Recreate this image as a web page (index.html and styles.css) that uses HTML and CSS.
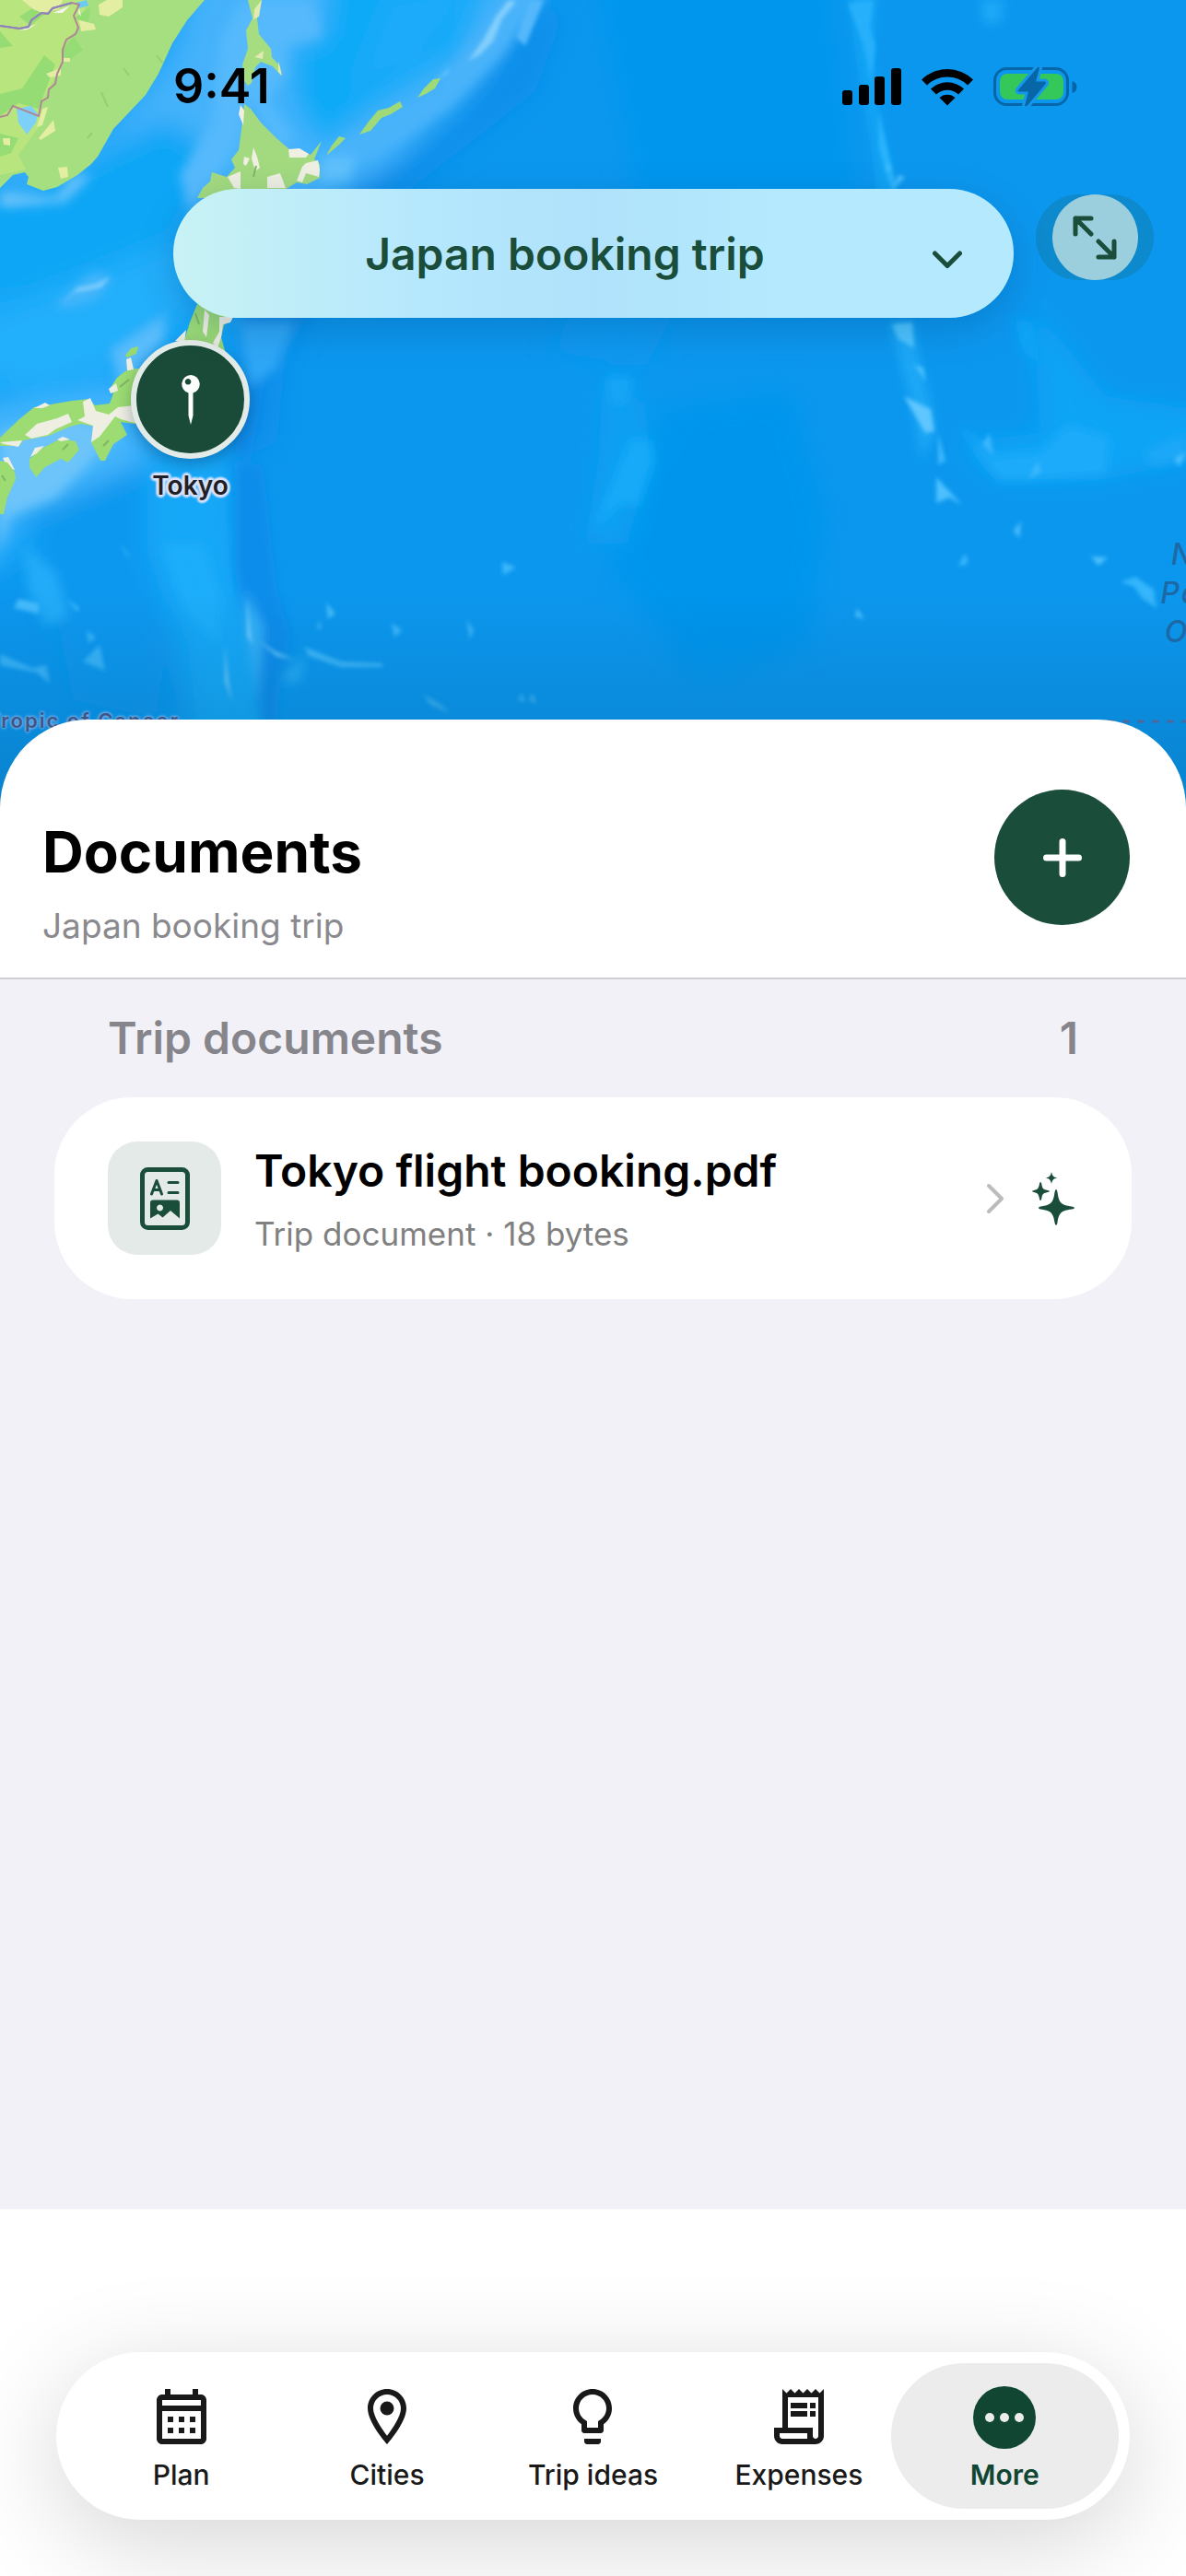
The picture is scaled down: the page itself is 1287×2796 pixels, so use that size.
FILE: index.html
```html
<!DOCTYPE html>
<html lang="en">
<head>
  <meta charset="UTF-8" />
  <meta name="viewport" content="width=device-width, initial-scale=1.0" />
  <title>Japan booking trip | Documents</title>
  <link rel="stylesheet" href="styles.css">
</head>
<body>
  <header class="hero">
    <svg class="map" viewBox="0 0 1287 880" preserveAspectRatio="xMidYMin slice" aria-hidden="true">
      <defs>
        <filter id="soft" x="-20%" y="-20%" width="140%" height="140%"><feGaussianBlur stdDeviation="14" /></filter>
        <filter id="haze" x="-20%" y="-20%" width="140%" height="140%"><feGaussianBlur stdDeviation="6" /></filter>
        <filter id="fine" x="-20%" y="-20%" width="140%" height="140%"><feGaussianBlur stdDeviation="2" /></filter>
        <linearGradient id="shade" x1="0" y1="0" x2="0" y2="1">
          <stop offset="0" stop-color="#00507f" stop-opacity="0" />
          <stop offset="1" stop-color="#00507f" stop-opacity=".3" />
        </linearGradient>
      </defs>
      <rect width="1287" height="880" fill="#0c97ee" />
      <!-- deep and shallow water -->
      <g filter="url(#soft)">
        <path d="M-40 -40H600L500 110L390 215L250 360L240 500L-40 640Z" fill="#12a5f8" />
        <path d="M220 -40H590L520 80L420 180L330 230L260 340L215 240L240 180L130 220L0 250V190L120 150L190 60Z" fill="#45b2fb" />
        <path d="M360 -40H540L500 60L400 120L350 160L318 110V50L350 40Z" fill="#0faaf8" />
        <path d="M60 190L180 130L240 170L200 230L140 300L40 330L-40 300V220Z" fill="#0fa6f6" />
        <path d="M90 300L190 260L210 330L120 400L40 430L-40 400V350Z" fill="#22affb" />
        <path d="M-40 450L130 420L160 500L90 530L20 560L-40 640Z" fill="#45b5fc" />
        <path d="M30 560L160 500L180 620L170 780L80 760L60 660Z" fill="#0c98ef" />
        <path d="M160 500L250 500L262 640L295 730L290 880L215 880L195 700L160 600Z" fill="#14a8f8" />
        <path d="M610 20L580 100L400 240L310 380L300 480L260 500L260 400L300 300L380 210L500 130L590 0Z" fill="#0e8eea" />
        <path d="M640 -40H900L930 200L860 340L700 260Z" fill="#0696ee" />
        <path d="M720 440L860 420L900 560L880 700L760 740L660 620Z" fill="#0695ed" />
        <path d="M1120 330L1200 430L1330 450V490L1200 520L1080 520L1040 480L1130 470Z" fill="#0ea4f6" />
        <path d="M655 400L700 440L705 500L680 590L635 590L650 500Z" fill="#10a0f3" />
        <path d="M600 380L640 300L760 280L700 400Z" fill="#0d99f0" />
        <path d="M420 0L520 -20L460 60L380 100Z" fill="#1caafa" />
      </g>
      <g filter="url(#haze)">
        <path d="M255 500L285 505L300 640L315 690L300 770L312 860L298 860L275 720L255 620Z" fill="#0e8deb" />
        <path d="M262 330L330 340L290 400L272 500L255 490L270 400Z" fill="#0e8cea" />
        <path d="M260 350H320L300 400L270 420Z" fill="#2ea7f6" />
        <path d="M560 -20H600L545 60L490 115L430 155L360 190L350 165L470 100Z" fill="#4ab3fa" />
        <path d="M270 100L262 150L240 190L205 230L195 190L230 130L240 40L262 0H340L350 40L310 50L312 80L290 110L320 150L300 160Z" fill="#55b9fc" />
        <path d="M350 172L385 170L380 195L345 198Z" fill="#5fc1fc" />
        <path d="M0 208L60 214L80 190L100 190L70 220L0 225Z" fill="#69c3fb" />
        <path d="M60 330L100 295L122 300L105 325L70 335Z" fill="#45b5fa" />
        <path d="M165 350L180 340L178 370L150 400L160 440L130 420L120 380Z" fill="#59bbfb" />
        <path d="M0 470L60 450L110 460L130 470L100 500L60 540L10 560L0 600Z" fill="#6cc4fa" />
        <path d="M922 -10H950L945 60L952 120L965 190L968 250L960 270L952 180L938 100Z" fill="#18a9f8" />
        <path d="M965 350L990 350L1000 400L1010 440L1014 470L1000 500L990 440Z" fill="#1ba8f6" />
        <path d="M658 408L688 410L680 438L662 438Z" fill="#13a6f6" />
        <path d="M685 475L706 478L710 500L692 550L675 545L645 575L662 530Z" fill="#18aaf9" />
        <path d="M1040 460L1080 495L1130 490L1160 460L1205 475L1200 515L1130 520L1085 522Z" fill="#1eabfa" />
        <path d="M1240 490L1287 470V500L1250 505Z" fill="#1aa8f8" />
        <path d="M1063 0L1090 0L1085 25L1068 25Z" fill="#1ba9f8" />
        <path d="M1100 345L1120 350L1130 400L1110 380Z" fill="#10a4f6" />
        <path d="M25 590L60 620L75 670L50 680L30 640Z" fill="#22abf8" />
        <path d="M175 590L220 590L240 650L236 700L200 660Z" fill="#1dadfa" />
        <path d="M265 640L285 680L280 760L270 700Z" fill="#35b3fa" />
        <path d="M305 740L330 710L325 740L310 740Z" fill="#2cb0f8" />
      </g>
      <g filter="url(#fine)">
        <path d="M981 430L1010 444L1014 468L1004 470Z" fill="#5fc6ff" />
        <path d="M1016 518L1044 548L1030 540L1016 546Z" fill="#4cc0ff" />
        <path d="M1018 470L1026 500L1018 505Z M1074 470L1078 495L1066 482Z M1126 500L1130 512L1116 520Z" fill="#3ab7fc" />
        <path d="M1108 566L1106 584L1100 576Z M1184 604L1202 605L1192 614Z M930 660L938 672L928 669Z" fill="#4cc0fc" />
        <path d="M1050 612L1048 600L1040 614Z" fill="#3ab9fc" />
        <path d="M1216 632L1232 626L1252 640L1255 660L1240 650L1230 636Z" fill="#35b6fc" />
        <path d="M1287 490L1274 498L1280 506Z" fill="#45bdfc" />
        <path d="M354 654L364 666L356 672Z M345 674L349 680L345 684Z" fill="#45bbfb" />
        <path d="M545 610L560 616L546 624Z M506 672L514 684L510 694Z M425 676L436 684L428 692Z" fill="#3cb7fb" />
        <path d="M330 702L370 718L415 720V724L370 724L335 712Z" fill="#3cb7fb" />
        <path d="M280 695L300 712L320 716L300 708Z M268 650L274 700L268 690Z M244 700L248 740L252 762L244 740Z" fill="#6ccbfd" />
        <path d="M0 710L35 725L50 722L54 742L40 730L0 722Z M90 718L108 700L114 728Z M94 684L104 692L96 698Z" fill="#38b4fa" />
        <path d="M20 650L42 655L42 666L15 660Z M72 650L86 660L84 664Z M130 590L138 600L141 608Z" fill="#45bbfc" />
        <path d="M460 754L480 766L488 774L466 764Z M562 760L566 752L570 762Z M574 760L578 752L582 764Z" fill="#3ab3f5" />
        <path d="M560 2L545 20L535 45L520 60L508 66L524 44L538 18L552 0Z M484 66L487 78L470 90L486 76Z" fill="#83cffc" />
        <path d="M575 0L590 0L570 50L560 40Z" fill="#55b8fb" />
        <path d="M953 120L960 150L972 200L972 212L965 200L954 160Z" fill="#2cb4fc" />
        <path d="M962 178L968 182L962 186Z M975 190L982 192L970 204Z M968 352L990 350L992 378L975 368Z M992 395L1002 400L1004 414Z" fill="#4dc4ff" />
        <path d="M920 4L948 0L944 30L950 50L945 90L938 50Z" fill="#28b0fc" />
        <path d="M65 332L80 318L110 312L120 300L104 308L84 312Z" fill="#7accfd" />
      </g>
      <!-- mainland -->
      <path d="M0 0H222L203 22L187 47L172 80L158 103L123 140L106 170L99 178L84 190L62 203L47 207L29 200L31 192L27 187L14 190L0 204Z" fill="#a5df80" />
      <path d="M0 0H95L86 30L72 43L68 67L62 80L45 112L42 138L20 168L28 184L0 190Z" fill="#b9e57e" />
      <path d="M0 34L14 50L0 52ZM34 0L56 0L50 14L33 28L21 18L34 10ZM0 102L24 96L48 60L60 70L50 96L42 118L20 112L0 126ZM0 145L20 150L12 166L0 170ZM66 56L80 40L90 54L74 66ZM80 20L98 8L96 24Z" fill="#94dc73" />
      <path d="M24 0H68L64 10L46 14L36 10ZM86 22L102 26L104 32L88 34ZM107 5L116 0H133V8L118 18L108 16ZM42 150L58 130L60 142L44 152ZM3 150H11V158L4 157ZM63 182L73 181L74 192L66 194ZM68 63H76V67H68ZM50 80L66 74V82L54 84ZM46 118L52 116L46 136L40 138Z" fill="#e4eea3" />
      <path d="M18 118L34 115L41 124L39 133L29 146L20 133Z" fill="#7dd0f8" />
      <path d="M82 3L94 0L96 6L86 9Z" fill="#6ccbf5" />
      <path d="M58 14L76 6L68 14ZM21 33L40 26L30 32ZM86 8L88 18L85 14Z" fill="#f3f3ec" />
      <path d="M0 28L21 31L31 29L34 22L45 14L52 15L57 9L78 3L86 5L80 17L85 30L82 37L72 43L68 54L68 67L62 80L60 91L53 97L52 106L45 110L42 126L14 115L8 125L0 127" fill="none" stroke="#b08794" stroke-width="2" />
      <path d="M0 28L21 31L31 29L34 22L45 14L52 15L57 9L78 3" fill="none" stroke="#8d84bd" stroke-width="2" />
      <path d="M110 100L117 116M134 74L140 82M170 60L176 68M95 150L100 144" stroke="#93cf74" stroke-width="2" />
      <!-- islands -->
      <path d="M269 0H284L279 20L281 37L294 53L295 62L304 72L305 82L296 72L283 67L277 73L273 90L269 93L265 88L263 70L269 53L267 33L274 20Z" fill="#a5dd80" />
      <path d="M276 10L284 0L281 18L275 21ZM302 66L306 82L302 78ZM276 62L286 55L285 64Z" fill="#e2eab0" />
      <path d="M265 113L272 118L283 133L300 150L314 162L328 164L337 168L349 153L341 173L347 178V193L333 200L322 198L312 204L296 215H214L220 204L228 197L230 187L246 192L255 182L251 173L259 163L263 133Z" fill="#a3da7f" />
      <path d="M261 114L265 120L264 136L259 124ZM275 160L279 170L282 182L277 186L273 172ZM265 170L271 172L267 180L264 178ZM247 192L261 186V205L254 204ZM290 192L304 188L310 204H290ZM313 162L325 161L335 167L332 171H314ZM328 181L332 177L345 174L347 184L346 192L332 188L328 198L322 196Z" fill="#efefe2" />
      <path d="M354 169L360 158L368 148L375 150L368 157ZM390 146L400 132L410 120L422 117L434 110L437 116L424 124L414 128L402 142ZM453 106L460 96L470 86L478 85L472 96L462 102Z" fill="#a0d978" />
      <path d="M214 330L252 346L243 353L240 366L243 377L250 400H215L190 380L201 366L206 350Z" fill="#9ad977" />
      <path d="M222 336L227 342L224 366L220 360ZM238 344H253L250 350L242 352L240 366L236 378L231 372L238 360ZM190 370L202 358L200 372ZM137 390L142 388L146 405L138 402Z" fill="#efefe4" />
      <path d="M136 386L142 378L150 376L148 384L138 388Z" fill="#97d86f" />
      <path d="M148 400L136 403L127 410L119 422L123 427L119 438L103 440L97 433L78 435L49 440L37 442L21 455L0 475V484H21L25 478L53 473L76 463L88 460L103 463L99 480L109 500H114L123 482L138 472L131 458L146 460H190V400Z" fill="#9cdc72" />
      <path d="M27 472L40 460L62 454L74 449L78 458L60 466L52 472L34 476ZM90 436L98 432L104 446L118 450L128 442L146 440L150 460L131 455L125 452L108 474L99 480L101 462L84 456L92 452ZM37 443L49 437L54 440L46 443ZM118 422L126 416L128 424L120 427ZM0 480L24 478L20 485L4 482ZM3 497L9 496L16 510L8 508Z" fill="#efeee3" />
      <path d="M32 498L45 487L66 476L82 479L86 488L74 502L66 498L49 507L39 518L32 507ZM0 500L8 502L16 512L17 520L8 540L4 558H0Z" fill="#9cdc72" />
      <path d="M33 496L38 486L48 484L40 492ZM62 477L68 474L76 477L66 479Z" fill="#efeee3" />
      <path d="M112 484L118 478M68 488L74 482M130 420L140 412M275 192L278 180M212 340L216 352M2 516L6 522" stroke="#7fb765" stroke-width="2" />
      <rect y="640" width="1287" height="240" fill="url(#shade)" />
      <path d="M1170 783H1287" stroke="#46699f" stroke-width="3" stroke-dasharray="8 8" />
    </svg>

    <span class="map-label tropic">Tropic of Cancer</span>
    <span class="map-label ocean">North<br>Pacific<br>Ocean</span>

    <a href="#tokyo" class="pin">
      <span class="pin-dot">
        <svg width="20" height="54" viewBox="0 0 20 54" fill="#fff">
          <path fill-rule="evenodd" d="M10 0a10 10 0 0 1 2.500 19.600V44L10 54L7.500 44V19.600A10 10 0 0 1 10 0ZM7 4a3.300 3.300 0 1 0 .1 0Z" />
        </svg>
      </span>
      <span class="pin-name">Tokyo</span>
    </a>

    <div class="overlay">
      <div class="status">
        <span class="time">9:41</span>
        <div class="status-icons">
          <svg width="64" height="40" viewBox="0 0 64 40">
            <rect y="24" width="11" height="16" rx="3" /><rect x="18" y="18" width="11" height="22" rx="3" />
            <rect x="35" y="9" width="11" height="31" rx="3" /><rect x="53" width="11" height="40" rx="3" />
          </svg>
          <svg width="56" height="41" viewBox="0 0 56 41">
            <path d="M0 12.500A40 40 0 0 1 56 12.500L50 18.500A31.500 31.500 0 0 0 6 18.500ZM10 22.500A26 26 0 0 1 46 22.500L40 28.500A17.500 17.500 0 0 0 16 28.500ZM19.500 32A12.500 12.500 0 0 1 36.500 32L28 40.500Z" />
          </svg>
          <svg width="91" height="44" viewBox="0 0 91 44">
            <rect x="1.500" y="2.500" width="79" height="39" rx="13" fill="none" stroke="#0666a8" stroke-width="3" />
            <path d="M85.500 16q5 1.500 5 6.500t-5 6.500Z" fill="#0666a8" />
            <rect x="7" y="8" width="69" height="28" rx="8" fill="#34c759" />
            <path d="M48 1L27 25.500Q26 27.500 28 27.500H38L34 43Q35 44 37 42.500L57 18.500Q57.500 16.500 55.500 16.500H46L50 2Q49.500 0 48 1Z" fill="#1598ec" stroke="#1598ec" stroke-width="6" />
            <path d="M48 1L27 25.500Q26 27.500 28 27.500H38L34 43Q35 44 37 42.500L57 18.500Q57.500 16.500 55.500 16.500H46L50 2Q49.500 0 48 1Z" fill="#0666a8" />
          </svg>
        </div>
      </div>
      <div class="controls">
        <div class="trip-picker">
          <select class="trip-select" aria-label="Trip">
            <option>Japan booking trip</option>
          </select>
          <svg class="trip-arrow" width="32" height="20" viewBox="0 0 32 20"><path d="M2.500 3L16 16.500L29.500 3" /></svg>
        </div>
        <button class="expand-btn" aria-label="Expand map">
          <span class="expand-circle">
            <svg width="48" height="48" viewBox="0 0 48 48"><path d="M3 20V3H20M3 3L20 20M28 28L45 45M45 28V45H28" /></svg>
          </span>
        </button>
      </div>
    </div>
  </header>

  <main class="sheet">
    <div class="sheet-head">
      <div>
        <h1>Documents</h1>
        <p>Japan booking trip</p>
      </div>
      <button class="add-btn" aria-label="Add document">
        <svg width="42" height="42" viewBox="0 0 42 42"><path d="M21 3.500V38.500M3.500 21H38.500" /></svg>
      </button>
    </div>
    <section class="docs">
      <div class="docs-title">
        <h2>Trip documents</h2>
        <span>1</span>
      </div>
      <div class="doc">
        <div class="doc-icon">
          <svg width="54" height="68" viewBox="0 0 54 68">
            <rect x="2.500" y="2.500" width="49" height="63" rx="6" fill="none" stroke="#1b4d3b" stroke-width="5" />
            <path d="M12.500 29L18 14.500L23.500 29M14.500 24.500H21.500M31 16.500H41M31 27.500H41" fill="none" stroke="#1b4d3b" stroke-width="3" stroke-linecap="round" stroke-linejoin="round" />
            <path fill-rule="evenodd" d="M14 35.500H40a3 3 0 0 1 3 3V55.500L33 47L24.500 54.500L19.500 50.500L11 55.500V38.500a3 3 0 0 1 3-3ZM21.500 40.500a3.500 3.500 0 1 0 .1 0Z" fill="#1b4d3b" />
          </svg>
        </div>
        <a href="#document" class="doc-link">
          <span class="doc-text">
            <strong>Tokyo flight booking.pdf</strong>
            <small>Trip document · 18 bytes</small>
          </span>
          <svg width="20" height="34" viewBox="0 0 20 34"><path d="M3 3L17 17L3 31" fill="none" stroke="#bcbcbe" stroke-width="4" stroke-linecap="round" stroke-linejoin="round" /></svg>
        </a>
        <button class="ai-btn" aria-label="Analyse document">
          <svg width="46" height="58" viewBox="0 0 46 58" fill="#1b4d3b">
            <path d="M26 19Q27 19 27.500 22C29 33 31 36 43 37.500Q46 38 46 39T43 40.500C31 42 29 45 27.500 55Q27 58 26 58T24.500 55C23 45 21 42 9 40.500Q7 40 7 39T9 37.500C21 36 23 33 24.500 22Q25 19 26 19Z" />
            <path d="M9 11Q10 11 10.300 13C11 18 12 19 17 20Q19 20.300 19 21T17 22C12 23 11 24 10.300 29Q10 31 9 31T8 29C7 24 6 23 2 22Q0 21.700 0 21T2 20C6 19 7 18 8 13Q8.300 11 9 11Z" />
            <path d="M21 0C22 4.500 23 5.500 27 6.500C23 7.500 22 8.500 21 13C20 8.500 19 7.500 15 6.500C19 5.500 20 4.500 21 0Z" />
          </svg>
        </button>
      </div>
    </section>
  </main>

  <footer class="bottom">
    <nav class="tabs">
      <a href="#plan" class="tab">
        <svg viewBox="2 1 20 22"><path d="M19 4h-1V2h-2v2H8V2H6v2H5c-1.100 0-2 .9-2 2v14c0 1.100.9 2 2 2h14c1.100 0 2-.9 2-2V6c0-1.100-.9-2-2-2Zm0 16H5V10h14v10Zm0-12H5V6h14v2ZM7 12h2v2H7Zm4 0h2v2h-2Zm4 0h2v2h-2ZM7 16h2v2H7Zm4 0h2v2h-2Zm4 0h2v2h-2Z" /></svg>
        <span>Plan</span>
      </a>
      <a href="#cities" class="tab">
        <svg viewBox="2 1 20 22"><path d="M12 2C8.130 2 5 5.130 5 9c0 5.250 7 13 7 13s7-7.750 7-13c0-3.870-3.130-7-7-7ZM7 9c0-2.760 2.240-5 5-5s5 2.240 5 5c0 2.880-2.880 7.190-5 9.880C9.920 16.210 7 11.850 7 9Z" /><circle cx="12" cy="9" r="2.500" /></svg>
        <span>Cities</span>
      </a>
      <a href="#ideas" class="tab">
        <svg viewBox="2 1 20 22"><path d="M9 21c0 .55.45 1 1 1h4c.55 0 1-.45 1-1v-1H9v1Zm3-19C8.140 2 5 5.140 5 9c0 2.380 1.190 4.470 3 5.740V17c0 .55.45 1 1 1h6c.55 0 1-.45 1-1v-2.260c1.810-1.270 3-3.360 3-5.740 0-3.860-3.140-7-7-7Zm2.850 11.100-.85.600V16h-4v-2.300l-.85-.6C7.800 12.160 7 10.630 7 9c0-2.760 2.240-5 5-5s5 2.240 5 5c0 1.630-.8 3.160-2.150 4.100Z" /></svg>
        <span>Trip ideas</span>
      </a>
      <a href="#expenses" class="tab">
        <svg viewBox="2 1 20 22"><path d="M19.500 3.500 18 2l-1.500 1.500L15 2l-1.500 1.500L12 2l-1.500 1.500L9 2 7.500 3.500 6 2v14H3v3c0 1.660 1.340 3 3 3h12c1.660 0 3-1.340 3-3V2l-1.500 1.500ZM15 20H6c-.55 0-1-.45-1-1v-1h10v2Zm4-1c0 .55-.45 1-1 1s-1-.45-1-1v-3H8V5h11v14ZM9 7h6v2H9Zm7 0h2v2h-2ZM9 10h6v2H9Zm7 0h2v2h-2Z" /></svg>
        <span>Expenses</span>
      </a>
      <a href="#more" class="tab active" aria-current="page">
        <svg class="more-icon" viewBox="0 0 68 68"><circle cx="34" cy="34" r="34" fill="#114633" /><g fill="#ececec"><circle cx="18" cy="34" r="5" /><circle cx="34" cy="34" r="5" /><circle cx="50" cy="34" r="5" /></g></svg>
        <span>More</span>
      </a>
    </nav>
  </footer>
</body>
</html>
```

FILE: styles.css
```css
* {
  box-sizing: border-box;
}
body {
  margin: 0;
  min-height: 100vh;
  display: flex;
  flex-direction: column;
  overflow-x: hidden;
  font-family: Inter, 'Liberation Sans', sans-serif;
  background: #fff;
  color: #000;
}
h1, h2, p {
  margin: 0;
}
a {
  color: inherit;
  text-decoration: none;
}
button {
  border: none;
  padding: 0;
  cursor: pointer;
}

/* map */
.hero {
  position: relative;
  overflow: hidden;
}
.map {
  display: block;
  width: 100%;
  height: auto;
}
.map-label {
  position: absolute;
  white-space: nowrap;
}
.tropic {
  left: -14px;
  top: 768px;
  font-size: 22px;
  line-height: 28px;
  font-weight: 600;
  letter-spacing: 2px;
  color: #3d5588;
  text-shadow: 0 0 3px #7db2e8, 0 0 3px #7db2e8, 0 0 4px #7db2e8;
}
.ocean {
  right: -92px;
  top: 581px;
  font-size: 32px;
  line-height: 42px;
  font-weight: 500;
  font-style: italic;
  letter-spacing: 2px;
  text-align: center;
  color: #1c69a6;
}
.pin {
  position: absolute;
  left: 142px;
  top: 369px;
  display: flex;
  flex-direction: column;
  align-items: center;
  gap: 12px;
}
.pin-dot {
  display: flex;
  align-items: center;
  justify-content: center;
  width: 129px;
  height: 129px;
  border: 6px solid #e3ebe8;
  border-radius: 50%;
  background: #194b38;
  box-shadow: 0 6px 16px rgba(0, 30, 60, 0.3);
}
.pin-name {
  font-size: 28px;
  line-height: 34px;
  font-weight: 600;
  color: #1f2026;
  text-shadow: 0 0 3px #d9e2fa, 3px 0 2px #d9e2fa, -3px 0 2px #d9e2fa, 0 3px 2px #d9e2fa, 0 -3px 2px #d9e2fa, 2px 2px 2px #d9e2fa, -2px -2px 2px #d9e2fa, 2px -2px 2px #d9e2fa, -2px 2px 2px #d9e2fa;
}

/* status bar and trip picker */
.overlay {
  position: absolute;
  inset: 0 0 auto;
}
.status {
  display: flex;
  align-items: center;
  justify-content: space-between;
  padding: 64px 118px 0 188px;
}
.time {
  font-size: 52px;
  line-height: 60px;
  font-weight: 600;
}
.status-icons {
  display: flex;
  align-items: center;
  gap: 22px;
}
.controls {
  display: flex;
  gap: 24px;
  padding: 81px 35px 0 188px;
}
.trip-picker {
  position: relative;
  flex: 1;
}
.trip-select {
  display: block;
  width: 100%;
  height: 140px;
  padding: 0 92px 0 30px;
  appearance: none;
  border: none;
  border-radius: 70px;
  background: linear-gradient(to right, #c8f2f4, #b5e7fd 30%, #b0e3fb 50%, #b5eafe 75%);
  box-shadow: 0 12px 40px rgba(0, 50, 100, 0.22);
  font-family: inherit;
  font-size: 48px;
  font-weight: 600;
  text-align: center;
  text-align-last: center;
  color: #1b4d3b;
}
.trip-arrow {
  position: absolute;
  right: 56px;
  top: 67px;
  pointer-events: none;
}
.trip-arrow path,
.expand-btn path {
  fill: none;
  stroke: #1b4d3b;
  stroke-width: 5;
  stroke-linecap: round;
  stroke-linejoin: round;
}
.expand-btn {
  width: 128px;
  height: 93px;
  margin-top: 6px;
  display: flex;
  justify-content: center;
  border-radius: 47px;
  background: #0d89cd;
}
.expand-circle {
  display: flex;
  align-items: center;
  justify-content: center;
  width: 93px;
  height: 93px;
  border-radius: 50%;
  background: #9bcfdd;
}

/* documents */
.sheet {
  position: relative;
  flex: 1;
  display: flex;
  flex-direction: column;
  margin-top: -99px;
  border-radius: 96px 96px 0 0;
  background: #fff;
}
.sheet-head {
  display: flex;
  align-items: flex-start;
  justify-content: space-between;
  padding: 76px 61px 34px 46px;
  border-bottom: 2px solid #cfced4;
}
.sheet-head h1 {
  padding-top: 30px;
  font-size: 62px;
  line-height: 76px;
  font-weight: 700;
}
.sheet-head p {
  font-size: 37px;
  line-height: 44px;
  padding-top: 20px;
  color: #8a8a8e;
}
.add-btn {
  display: flex;
  align-items: center;
  justify-content: center;
  width: 147px;
  height: 147px;
  border-radius: 50%;
  background: #1b4d3b;
}
.add-btn path {
  stroke: #fff;
  stroke-width: 7;
  stroke-linecap: round;
}
.docs {
  flex: 1;
  padding: 34px 59px;
  background: #f2f1f8;
}
.docs-title {
  display: flex;
  justify-content: space-between;
  padding: 0 58px 34px;
  font-size: 48px;
  line-height: 60px;
  font-weight: 600;
  color: #86858b;
}
.docs-title h2 {
  font-size: inherit;
  font-weight: inherit;
}
.doc {
  display: flex;
  align-items: center;
  padding: 48px 62px 48px 58px;
  border-radius: 84px;
  background: #fff;
}
.doc-icon {
  display: flex;
  align-items: center;
  justify-content: center;
  width: 123px;
  height: 123px;
  border-radius: 32px;
  background: #e4eae8;
}
.doc-link {
  flex: 1;
  display: flex;
  align-items: center;
  justify-content: space-between;
  padding: 0 30px 0 36px;
}
.doc-text {
  display: flex;
  flex-direction: column;
  gap: 16px;
}
.doc-text strong {
  font-size: 48px;
  line-height: 60px;
  font-weight: 600;
}
.doc-text small {
  font-size: 35px;
  line-height: 44px;
  color: #808080;
}
.ai-btn {
  display: flex;
  background: none;
}

/* tab bar */
.bottom {
  position: relative;
  padding: 155px 61px 61px;
}
.tabs {
  display: grid;
  grid-template-columns: repeat(5, 1fr);
  padding: 12px 24px;
  border-radius: 91px;
  background: #fff;
  box-shadow: 0 24px 110px rgba(0, 0, 0, 0.17);
}
.tab {
  display: flex;
  flex-direction: column;
  align-items: center;
  gap: 12px;
  height: 158px;
  margin: 0 -12px;
  padding-top: 25px;
  border-radius: 79px;
  font-size: 30px;
  line-height: 36px;
  font-weight: 500;
  color: #1a1919;
}
.tab svg {
  width: 60px;
  height: 66px;
  fill: #1a1919;
}
.tab.active {
  background: #ececec;
  color: #114633;
  font-weight: 600;
}
.tab .more-icon {
  width: 68px;
  height: 68px;
  margin-bottom: -2px;
}
```
